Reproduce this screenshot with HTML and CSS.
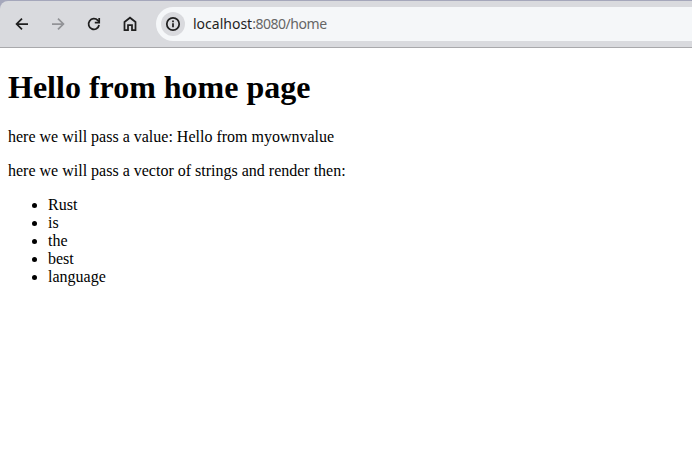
FILE: index.html
```html
<!DOCTYPE html>
<html lang="en">
<head>
<meta charset="utf-8">
<title>Home</title>
<link rel="stylesheet" href="styles.css">
</head>
<body>
<header class="frame">
 <div class="toolbar">
  <nav class="controls">
    <svg class="icon" viewBox="0 0 16 16"><path d="M14 8H3.4M8 2.6 2.6 8 8 13.4"/></svg>
    <svg class="icon disabled" viewBox="0 0 16 16"><path d="M2 8h10.6M8 2.6 13.4 8 8 13.4"/></svg>
    <svg class="icon" viewBox="0 0 16 16"><path d="M13.1 9A5.3 5.3 0 1 1 11.8 4.4L13 5.6"/><path d="M13.2 2v4.6H8.8"/></svg>
    <svg class="icon" viewBox="0 0 16 16"><path d="M2.5 6 8 1.7 13.5 6v8.2H10V9H6v5.2H2.5z"/></svg>
  </nav>
  <div class="address">
    <span class="info"><svg class="icon" viewBox="0 0 16 16"><circle cx="8" cy="8" r="6.2"/><path d="M8 7.2v4M8 4.6v1.6"/></svg></span>
    <span class="url">localhost<span class="rest">:8080/home</span></span>
  </div>
 </div>
</header>
<main class="page">
  <h1>Hello from home page</h1>
  <p>here we will pass a value: Hello from myownvalue</p>
  <p>here we will pass a vector of strings and render then:</p>
  <ul>
    <li>Rust</li>
    <li>is</li>
    <li>the</li>
    <li>best</li>
    <li>language</li>
  </ul>
</main>
</body>
</html>
```
FILE: styles.css
```css
body {
  margin: 0;
  background: #fff;
  color: #000;
  font: 16px "Liberation Serif", serif;
  overflow: hidden;
}
.frame {
  background: #a5a7bb;
  padding-top: 1px;
}
.toolbar {
  box-sizing: border-box;
  height: 47px;
  display: flex;
  align-items: center;
  gap: 18px;
  padding-left: 14px;
  background: #d9dade;
  border-bottom: 1px solid #a9a9ac;
  border-top-left-radius: 8px;
}
.controls {
  display: flex;
  gap: 20px;
}
.icon {
  display: block;
  width: 16px;
  height: 16px;
  fill: none;
  stroke: #1f1f1f;
  stroke-width: 1.75;
}
.disabled { stroke: #929397; }
.address {
  flex: 1;
  height: 34px;
  display: flex;
  align-items: center;
  gap: 8px;
  padding-left: 5px;
  background: #f5f7f9;
  border-radius: 17px 0 0 17px;
}
.info {
  display: grid;
  place-items: center;
  width: 24px;
  height: 24px;
  border-radius: 50%;
  background: #d9dade;
}
.url {
  padding-bottom: 2px;
  font: 14px "Noto Sans", sans-serif;
  color: #1f1f1f;
}
.rest {
  color: #666;
  letter-spacing: -0.47px;
}
.page { padding: 0 8px; }
h1 {
  margin: 21.44px 0;
  font-size: 32px;
}
p, ul { margin: 16px 0; }
ul { padding-left: 40px; }
```
